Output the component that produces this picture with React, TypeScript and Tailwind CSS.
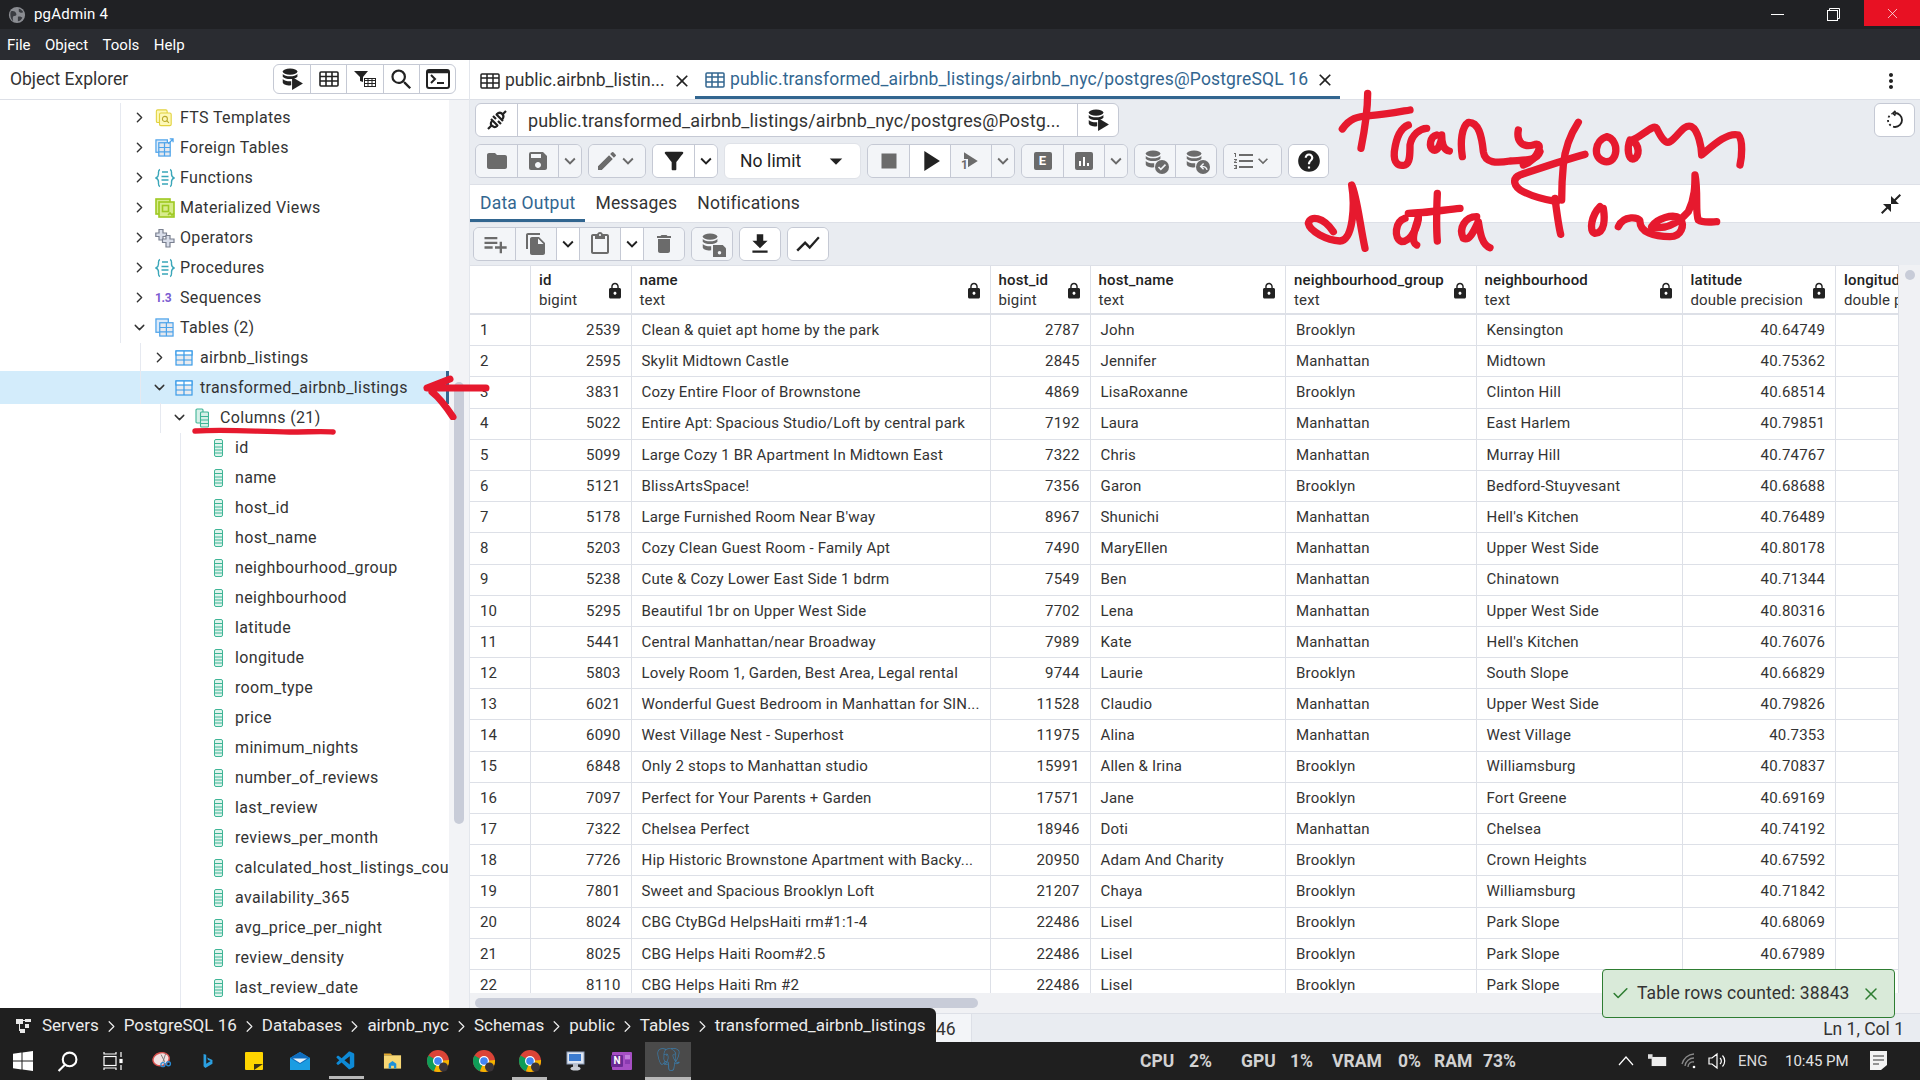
import React from "react";
import { ChevronRight, ChevronDown, X, Check } from "lucide-react";
import {
  MdFolder, MdSave, MdEdit, MdFilterAlt, MdStop, MdPlayArrow, MdPlaylistAdd, MdFileCopy, MdContentPaste,
  MdDelete, MdFileDownload, MdShowChart, MdHelp, MdLock, MdMoreVert, MdSearch, MdKeyboardArrowDown,
  MdFormatListNumbered, MdCloseFullscreen, MdClose, MdArrowDropDown,
} from "react-icons/md";
import { SiPostgresql } from "react-icons/si";
import { VscVscode } from "react-icons/vsc";

const rows: [string, string, string, string, string, string, string][] = [
  ["1","2539","Clean & quiet apt home by the park","2787","John","Brooklyn","Kensington|40.64749"],
  ["2","2595","Skylit Midtown Castle","2845","Jennifer","Manhattan","Midtown|40.75362"],
  ["3","3831","Cozy Entire Floor of Brownstone","4869","LisaRoxanne","Brooklyn","Clinton Hill|40.68514"],
  ["4","5022","Entire Apt: Spacious Studio/Loft by central park","7192","Laura","Manhattan","East Harlem|40.79851"],
  ["5","5099","Large Cozy 1 BR Apartment In Midtown East","7322","Chris","Manhattan","Murray Hill|40.74767"],
  ["6","5121","BlissArtsSpace!","7356","Garon","Brooklyn","Bedford-Stuyvesant|40.68688"],
  ["7","5178","Large Furnished Room Near B'way","8967","Shunichi","Manhattan","Hell's Kitchen|40.76489"],
  ["8","5203","Cozy Clean Guest Room - Family Apt","7490","MaryEllen","Manhattan","Upper West Side|40.80178"],
  ["9","5238","Cute & Cozy Lower East Side 1 bdrm","7549","Ben","Manhattan","Chinatown|40.71344"],
  ["10","5295","Beautiful 1br on Upper West Side","7702","Lena","Manhattan","Upper West Side|40.80316"],
  ["11","5441","Central Manhattan/near Broadway","7989","Kate","Manhattan","Hell's Kitchen|40.76076"],
  ["12","5803","Lovely Room 1, Garden, Best Area, Legal rental","9744","Laurie","Brooklyn","South Slope|40.66829"],
  ["13","6021","Wonderful Guest Bedroom in Manhattan for SIN...","11528","Claudio","Manhattan","Upper West Side|40.79826"],
  ["14","6090","West Village Nest - Superhost","11975","Alina","Manhattan","West Village|40.7353"],
  ["15","6848","Only 2 stops to Manhattan studio","15991","Allen & Irina","Brooklyn","Williamsburg|40.70837"],
  ["16","7097","Perfect for Your Parents + Garden","17571","Jane","Brooklyn","Fort Greene|40.69169"],
  ["17","7322","Chelsea Perfect","18946","Doti","Manhattan","Chelsea|40.74192"],
  ["18","7726","Hip Historic Brownstone Apartment with Backy...","20950","Adam And Charity","Brooklyn","Crown Heights|40.67592"],
  ["19","7801","Sweet and Spacious Brooklyn Loft","21207","Chaya","Brooklyn","Williamsburg|40.71842"],
  ["20","8024","CBG CtyBGd HelpsHaiti rm#1:1-4","22486","Lisel","Brooklyn","Park Slope|40.68069"],
  ["21","8025","CBG Helps Haiti Room#2.5","22486","Lisel","Brooklyn","Park Slope|40.67989"],
  ["22","8110","CBG Helps Haiti Rm #2","22486","Lisel","Brooklyn","Park Slope|40.67989"],
];

const gridCols = "grid grid-cols-[61px_100.5px_359px_100px_195.5px_190.5px_206px_153.5px_63px]";

function Db({ className = "" }: { className?: string }) {
  return (
    <svg viewBox="0 0 24 24" className={className} fill="currentColor">
      <ellipse cx="11" cy="5" rx="8" ry="3.4" />
      <path d="M3 7.6c1.4 1.7 4.6 2.6 8 2.6s6.6-.9 8-2.6v3c-1.4 1.7-4.6 2.6-8 2.6s-6.6-.9-8-2.6z" />
      <path d="M3 13c1.4 1.7 4.6 2.6 8 2.6.4 0 .8 0 1.2-.1v4.5c-.4 0-.8.1-1.2.1-4.4 0-8-1.5-8-3.6z" />
    </svg>
  );
}
function DbBadge({ kind }: { kind: "run" | "check" | "back" | "save" }) {
  return (
    <span className="relative block w-[24px] h-[24px]">
      <Db className="w-[22px] h-[22px]" />
      {kind === "run" && (
        <svg viewBox="0 0 12 12" className="absolute right-0 bottom-[1px] w-[13px] h-[13px]" fill="currentColor"><path d="M1 0l10 6-10 6z" /></svg>
      )}
      {kind === "check" && (
        <svg viewBox="0 0 12 12" className="absolute right-[-2px] bottom-[-1px] w-[14px] h-[14px]">
          <circle cx="6" cy="6" r="6" fill="currentColor" />
          <path d="M3 6l2 2 4-4" stroke="#f3f5f8" strokeWidth="1.4" fill="none" />
        </svg>
      )}
      {kind === "back" && (
        <svg viewBox="0 0 12 12" className="absolute right-[-2px] bottom-[-1px] w-[14px] h-[14px]">
          <circle cx="6" cy="6" r="6" fill="currentColor" />
          <path d="M9.5 8.5C9 6.5 7.5 5.5 5 5.5M6.5 3L4 5.5 6.5 8" stroke="#f3f5f8" strokeWidth="1.2" fill="none" />
        </svg>
      )}
      {kind === "save" && (
        <svg viewBox="0 0 12 12" className="absolute right-[-2px] bottom-[-1px] w-[13px] h-[13px]">
          <path d="M0 1h9l3 3v8H0z" fill="currentColor" />
          <circle cx="6" cy="8" r="1.6" fill="#f3f5f8" />
        </svg>
      )}
    </span>
  );
}

function Plug() {
  return (
    <svg viewBox="0 0 24 24" className="w-[24px] h-[24px]" fill="none" stroke="#222" strokeWidth="2.2">
      <path d="M3 21l4-4M21 3l-4 4" />
      <path d="M6 11l7 7M11 6l7 7" />
      <path d="M7.500 12.500c-2.500 2.500-2 4.500 0 5.500 1.500 1.500 3 1.500 5-.5M11.500 6.500c2-2 4-2.500 6-.5 1.500 2 1.500 3.500-.5 5.500" />
      <path d="M8 8l3 3M13 13l3 3" />
    </svg>
  );
}

function Btn({ w, on, children, first }: { w: string; on?: boolean; children: React.ReactNode; first?: boolean }) {
  return (
    <div className={`${w} h-full flex items-center justify-center ${first ? "" : "border-l border-[#c5c9d4]"} ${on ? "bg-white text-[#222]" : "bg-[#f3f5f8] text-[#6b6b6b]"}`}>
      {children}
    </div>
  );
}
function Group({ children }: { children: React.ReactNode }) {
  return <div className="h-[34px] flex rounded-[6px] border border-[#c5c9d4] overflow-hidden shrink-0">{children}</div>;
}
const Down = () => <MdKeyboardArrowDown size={24} />;

function FtsIcon() {
  return (
    <svg viewBox="0 0 20 20" className="w-[18px] h-[18px]" fill="#fdf8b8" stroke="#e2d23f" strokeWidth="1.2">
      <rect x="1.500" y="1" width="12" height="14" rx="1.500" />
      <rect x="5" y="4.500" width="13" height="14" rx="1.500" />
      <circle cx="11" cy="11" r="2.800" fill="none" stroke="#b9a92b" />
      <path d="M13 13l2.500 2.500" stroke="#b9a92b" />
    </svg>
  );
}
function ForeignIcon() {
  return (
    <svg viewBox="0 0 20 20" className="w-[19px] h-[19px]" fill="#dbeafa" stroke="#4da3ea" strokeWidth="1.3">
      <rect x="1" y="2" width="12" height="13" />
      <rect x="4" y="5" width="12" height="14" fill="#e4e8ee" />
      <path d="M4 10h12M4 14.500h12M10 5v14" />
      <path d="M14 6l5-5M15.500 1H19v3.500" fill="none" />
    </svg>
  );
}
function Braces({ color = "#3aa6b9" }: { color?: string }) {
  return (
    <svg viewBox="0 0 20 20" className="w-[20px] h-[20px]" fill="none" stroke={color} strokeWidth="1.4">
      <path d="M5 1.500C3 2 3.500 4 3.500 6S3 9 1 10c2 1 2.500 2 2.500 4s-.5 4 1.500 4.500" />
      <path d="M15 1.500c2 .5 1.500 2.500 1.500 4.500s.5 3 2.500 4c-2 1-2.500 2-2.500 4s.5 4-1.500 4.500" />
      <path d="M7 4h6M6.500 8.500h7M6.500 12h7M7 16h6" />
    </svg>
  );
}
function MatIcon() {
  return (
    <svg viewBox="0 0 20 20" className="w-[20px] h-[20px]" fill="#d7ec8c" stroke="#9ec921" strokeWidth="1.6">
      <rect x="1" y="1" width="14" height="15" />
      <rect x="4" y="4" width="15" height="15" />
      <rect x="7.500" y="7.500" width="6" height="6" fill="none" />
      <path d="M13 17l2-2 2 2 2-2" fill="none" />
    </svg>
  );
}
function OpIcon() {
  return (
    <svg viewBox="0 0 20 20" className="w-[20px] h-[20px]" fill="#d9deea" stroke="#7a8090" strokeWidth="1.2">
      <path d="M4 1.500h4v3.500h3.500v3.500H8V12H4V8.500H.8V5H4z" />
      <path d="M11 7.500h4V11h4v3.500h-4V19h-4v-4.500H7.500V11H11z" />
    </svg>
  );
}
function SeqIcon() {
  return <span className="text-[12px] font-bold text-[#7a5bd1] tracking-tight">1.3</span>;
}
function TablesIcon() {
  return (
    <svg viewBox="0 0 20 20" className="w-[19px] h-[19px]" fill="#dbeafa" stroke="#4da3ea" strokeWidth="1.3">
      <rect x="1" y="1" width="13" height="14" />
      <rect x="5" y="5" width="14" height="14" fill="#e4e8ee" />
      <path d="M5 10h14M5 14.500h14M12 5v14" />
    </svg>
  );
}
function TableIcon() {
  return (
    <svg viewBox="0 0 18 16" className="w-[18px] h-[16px]" fill="#e9ebef" stroke="#3a9be8" strokeWidth="1.200">
      <rect x="1" y="1" width="16" height="14" />
      <rect x="1" y="1" width="16" height="4" fill="#fff" />
      <path d="M1 10h16M9 1v14" />
    </svg>
  );
}
function ColumnsIcon() {
  return (
    <svg viewBox="0 0 14 20" className="w-[14px] h-[20px]" fill="#d7f0e8" stroke="#3fb596" strokeWidth="1.100">
      <rect x="1" y="1" width="7" height="14" rx="1" />
      <rect x="5.500" y="4" width="8" height="15" rx="1" />
      <path d="M5.500 8.500h8M5.500 12h8M5.500 15.500h8" />
    </svg>
  );
}
function ColumnIcon() {
  return (
    <svg viewBox="0 0 9 18" className="w-[9px] h-[18px]" fill="#dff4ed" stroke="#3fb596" strokeWidth="1">
      <rect x="0.500" y="0.500" width="8" height="17" rx="1.500" />
      <path d="M.5 4.500h8M.5 8h8M.5 11h8M.5 14h8" />
    </svg>
  );
}

function TreeRow({ level, open, leaf, icon, label, selected }: { level: 0 | 1 | 2 | 3; open?: boolean; leaf?: boolean; icon: React.ReactNode; label: string; selected?: boolean }) {
  const ml = ["ml-[120px]", "ml-[140px]", "ml-[160px]", "ml-[180px]"][level];
  return (
    <div className={`relative flex ${selected ? "h-[33px] -my-[1.5px] bg-[#d3ecfb]" : "h-[30px]"}`}>
      <div className={`${ml} border-l border-[#e6e9f0] flex items-center h-full whitespace-nowrap overflow-hidden flex-1`}>
        {!leaf && (
          <span className="w-[34px] pl-[10px] shrink-0 text-[#333]">
            {open ? <ChevronDown size={17} strokeWidth={2} /> : <ChevronRight size={17} strokeWidth={2} />}
          </span>
        )}
        {leaf && <span className="w-[33px] shrink-0" />}
        <span className={`${leaf ? "w-[21px]" : "w-[25px]"} shrink-0 flex items-center`}>{icon}</span>
        <span className="text-[16px] text-[#333] tracking-[0.35px]">{label}</span>
      </div>
      {selected && <span className="absolute right-0 top-0 bottom-0 w-[3px] bg-[#326690]" />}
    </div>
  );
}

function Tab({ label, active }: { label: string; active?: boolean }) {
  return (
    <div className={`h-full flex items-center px-[10px] pt-[3px] text-[17.5px] tracking-[0.2px] ${active ? "text-[#326690] border-b-[3px] border-[#326690]" : "text-[#333] pb-[3px]"}`}>{label}</div>
  );
}

function Head({ a, b }: { a: string; b: string }) {
  return (
    <div className="relative border-r border-[#dde0e7] h-full pl-[8px] pt-[4px] overflow-hidden whitespace-nowrap">
      <div className="text-[15px] font-medium leading-[20px] text-[#222] tracking-[0.15px]">{a}</div>
      <div className="text-[15px] leading-[20px] text-[#333] tracking-[0.15px]">{b}</div>
      {a !== "longitud" && <MdLock size={18} className="absolute right-[7px] top-[16px] text-[#222]" />}
    </div>
  );
}
function Cell({ v, right }: { v: string; right?: boolean }) {
  return <div className={`border-r border-[#dde0e7] h-full flex items-center overflow-hidden whitespace-nowrap text-[15px] tracking-[0.18px] text-[#333] ${right ? "justify-end pr-[10px]" : "pl-[10px]"}`}>{v}</div>;
}

function Chrome() {
  return (
    <svg viewBox="0 0 24 24" className="w-[24px] h-[24px]">
      <circle cx="12" cy="12" r="11" fill="#db4437" />
      <path d="M12 12L2.500 6.500A11 11 0 0 0 8 22.300z" fill="#0f9d58" />
      <path d="M12 12l11-1A11 11 0 0 1 8 22.300z" fill="#f4b400" />
      <circle cx="12" cy="12" r="5" fill="#fff" />
      <circle cx="12" cy="12" r="3.800" fill="#4285f4" />
      <circle cx="17.500" cy="18" r="4.500" fill="#3a3438" />
    </svg>
  );
}

const trayText = "text-[17.5px] font-bold text-[#d2d2d2]";

export default function App() {
  const columns = ["id","name","host_id","host_name","neighbourhood_group","neighbourhood","latitude","longitude","room_type","price","minimum_nights","number_of_reviews","last_review","reviews_per_month","calculated_host_listings_count","availability_365","avg_price_per_night","review_density","last_review_date","x","y"];
  return (
    <div className="relative w-[1920px] h-[1080px] overflow-hidden flex flex-col bg-white font-['Roboto',sans-serif]">
      {/* title bar */}
      <div className="h-[29px] bg-[#202124] flex items-center shrink-0 text-white">
        <svg viewBox="0 0 20 20" className="ml-[8px] w-[18px] h-[18px]">
          <circle cx="10" cy="10" r="9" fill="#8b8d92" />
          <path d="M3 6c3-1 5 0 6 2s0 3-2 3-2 3-1 6c-3-2-4-7-3-11zM12 3c2 0 4 2 5 4-2 1-4 0-5-1zM11 12c2-1 4 0 5 1-1 2-3 4-5 4z" fill="#3a3c41" />
        </svg>
        <span className="ml-[8px] text-[15px] tracking-[0.2px]">pgAdmin 4</span>
        <div className="ml-auto flex items-center h-full">
          <div className="w-[50px] flex justify-center"><span className="block w-[13px] h-px bg-white" /></div>
          <div className="w-[62px] flex justify-center">
            <svg viewBox="0 0 13 13" className="w-[13px] h-[13px]" fill="none" stroke="#fff"><rect x="0.500" y="2.500" width="10" height="10" /><path d="M2.500 2.500v-2h10v10h-2" /></svg>
          </div>
          <div className="w-[56px] h-[26px] self-start bg-[#e81123] flex items-center justify-center">
            <X size={17} strokeWidth={1} className="text-white" />
          </div>
        </div>
      </div>
      {/* menu bar */}
      <div className="h-[31px] bg-[#2a2c31] flex items-center shrink-0 text-white text-[15px] pl-[7px] pt-[1px] gap-[14.5px]">
        <span>File</span><span>Object</span><span>Tools</span><span>Help</span>
      </div>

      {/* body */}
      <div className="flex flex-1 min-h-0">
        {/* sidebar */}
        <div className="w-[470px] shrink-0 flex flex-col border-r border-[#e3e6ec]">
          <div className="h-[40px] shrink-0 border-b border-[#dde0e7] flex items-center pl-[10px] pr-[13px]">
            <span className="text-[17.5px] text-[#333]">Object Explorer</span>
            <div className="ml-auto h-[30px] mt-[-1px] flex rounded-[6px] border border-[#c5c9d4] overflow-hidden">
              <div className="w-[36px] flex items-center justify-center text-[#222]"><DbBadge kind="run" /></div>
              <div className="w-[36px] border-l border-[#c5c9d4] flex items-center justify-center">
                <svg viewBox="0 0 20 16" className="w-[20px] h-[16px]" fill="none" stroke="#222" strokeWidth="1.600"><rect x="1" y="1" width="18" height="14" rx="1" /><path d="M1 5.500h18M1 10h18M7 1v14M13 1v14" /></svg>
              </div>
              <div className="w-[37px] border-l border-[#c5c9d4] flex items-center justify-center">
                <svg viewBox="0 0 22 16" className="w-[22px] h-[16px]" fill="#222"><path d="M0 0h14L9 6v5L6 10V6z" /><rect x="10.500" y="7.500" width="11" height="8" fill="none" stroke="#222" /><path d="M10.500 9.500h11M14 8v8M18 8v8M10.500 12.500h11" stroke="#222" /></svg>
              </div>
              <div className="w-[36px] border-l border-[#c5c9d4] flex items-center justify-center text-[#222]"><MdSearch size={27} /></div>
              <div className="w-[36px] border-l border-[#c5c9d4] flex items-center justify-center">
                <svg viewBox="0 0 24 20" className="w-[24px] h-[20px]" fill="none" stroke="#222" strokeWidth="2"><rect x="1" y="1" width="22" height="18" rx="2" /><path d="M5 6l4 4-4 4M11 14h7" /><path d="M1 3h22" strokeWidth="2.500" /></svg>
              </div>
            </div>
          </div>
          <div className="flex-1 flex min-h-0">
            <div className="w-[449px] pt-[2.5px] overflow-hidden">
              <TreeRow level={0} icon={<FtsIcon />} label="FTS Templates" />
              <TreeRow level={0} icon={<ForeignIcon />} label="Foreign Tables" />
              <TreeRow level={0} icon={<Braces />} label="Functions" />
              <TreeRow level={0} icon={<MatIcon />} label="Materialized Views" />
              <TreeRow level={0} icon={<OpIcon />} label="Operators" />
              <TreeRow level={0} icon={<Braces />} label="Procedures" />
              <TreeRow level={0} icon={<SeqIcon />} label="Sequences" />
              <TreeRow level={0} open icon={<TablesIcon />} label="Tables (2)" />
              <TreeRow level={1} icon={<TableIcon />} label="airbnb_listings" />
              <TreeRow level={1} open selected icon={<TableIcon />} label="transformed_airbnb_listings" />
              <TreeRow level={2} open icon={<ColumnsIcon />} label="Columns (21)" />
              {columns.map((c) => <TreeRow key={c} level={3} leaf icon={<ColumnIcon />} label={c} />)}
            </div>
            <div className="w-[20px] bg-[#f2f3f6] relative">
              <div className="absolute left-[5px] top-[282px] w-[10px] h-[442px] rounded-full bg-[#c8ccd8]" />
            </div>
          </div>
        </div>

        {/* main */}
        <div className="flex-1 min-w-0 flex flex-col">
          {/* editor tabs */}
          <div className="h-[40px] shrink-0 flex items-stretch border-b border-[#dde0e7] text-[17.5px]">
            <div className="w-[225px] flex items-center pl-[10px] pt-[2px] text-[#333]">
              <svg viewBox="0 0 20 16" className="w-[20px] h-[16px] mr-[5px]" fill="none" stroke="#222" strokeWidth="1.500"><rect x="1" y="1" width="18" height="14" rx="1" /><path d="M1 5h18M1 10h18M7 1v14M13 1v14" /></svg>
              <span>public.airbnb_listin...</span>
              <MdClose size={20} className="ml-[7px] text-[#222]" />
            </div>
            <div className="w-[645px] flex items-center pl-[10px] pt-[3px] text-[#326690] border-b-[3px] border-[#326690] h-[39px]">
              <svg viewBox="0 0 20 16" className="w-[20px] h-[16px] mr-[5px]" fill="none" stroke="#326690" strokeWidth="1.500"><rect x="1" y="1" width="18" height="14" rx="1" /><path d="M1 5h18M1 10h18M7 1v14M13 1v14" /></svg>
              <span className="whitespace-nowrap tracking-[0.16px]">public.transformed_airbnb_listings/airbnb_nyc/postgres@PostgreSQL 16</span>
              <MdClose size={20} className="ml-[7px] text-[#222]" />
            </div>
            <div className="ml-auto pr-[17px] pt-[2px] flex items-center text-[#222]"><MdMoreVert size={24} /></div>
          </div>

          {/* query toolbars */}
          <div className="h-[85px] shrink-0 bg-[#e9ecf1] pl-[5px] pr-[5px] pt-[3px] border-b border-[#dde0e7]">
            <div className="flex h-[34px]">
              <div className="w-[644px] h-[34px] flex rounded-[6px] border border-[#c5c9d4] bg-white overflow-hidden">
                <div className="w-[41px] flex items-center justify-center"><Plug /></div>
                <div className="flex-1 border-l border-[#c5c9d4] flex items-center pl-[10px] text-[18px] tracking-[0.12px] text-[#333] whitespace-nowrap">public.transformed_airbnb_listings/airbnb_nyc/postgres@Postg...</div>
                <div className="w-[41px] border-l border-[#c5c9d4] flex items-center justify-center text-[#222]"><DbBadge kind="run" /></div>
              </div>
              <div className="ml-auto w-[41px] h-[34px] rounded-[6px] border border-[#c5c9d4] bg-white flex items-center justify-center">
                <svg viewBox="0 0 20 20" className="w-[20px] h-[20px]" fill="none" stroke="#222" strokeWidth="1.800"><path d="M10 3a7 7 0 0 1 0 14" /><path d="M10 17a7 7 0 0 1-7-7 7 7 0 0 1 4-6.300" strokeDasharray="2 2.500" /><path d="M10.500 1L8 3.200l2.500 2.300" /></svg>
              </div>
            </div>
            <div className="flex gap-[6px] mt-[7px] h-[34px]">
              <Group>
                <Btn first w="w-[41px]"><MdFolder size={24} /></Btn>
                <Btn w="w-[41px]"><MdSave size={24} /></Btn>
                <Btn w="w-[23px]"><Down /></Btn>
              </Group>
              <Group><Btn first w="w-[56px]"><span className="flex items-center"><MdEdit size={24} /><MdKeyboardArrowDown size={22} className="-ml-[2px]" /></span></Btn></Group>
              <Group>
                <Btn first on w="w-[41px]"><MdFilterAlt size={28} /></Btn>
                <Btn on w="w-[23px]"><Down /></Btn>
              </Group>
              <div className="w-[137px] h-[36px] -mt-[1px] bg-white rounded-[6px] border border-[#dfe2e8] flex items-center pl-[15px] pr-[9px] text-[17.5px] tracking-[0.1px] text-[#222]">
                No limit<MdArrowDropDown size={30} className="ml-auto" />
              </div>
              <Group>
                <Btn first w="w-[41px]"><MdStop size={30} /></Btn>
                <Btn on w="w-[41px]"><MdPlayArrow size={34} /></Btn>
                <Btn w="w-[41px]">
                  <span className="relative block w-[24px] h-[24px]">
                    <MdPlayArrow size={30} className="absolute -left-[5px] -top-[3px]" />
                    <span className="absolute left-[2px] top-[10px] text-[12px] font-bold leading-none bg-[#f3f5f8]">1</span>
                  </span>
                </Btn>
                <Btn w="w-[23px]"><Down /></Btn>
              </Group>
              <Group>
                <Btn first w="w-[41px]"><span className="w-[18px] h-[18px] rounded-[2px] bg-[#6b6b6b] text-white text-[13px] font-bold flex items-center justify-center">E</span></Btn>
                <Btn w="w-[41px]"><span className="w-[18px] h-[18px] rounded-[2px] bg-[#6b6b6b] flex items-end justify-center gap-[2px] pb-[4px]"><i className="block w-[2px] h-[5px] bg-white" /><i className="block w-[2px] h-[9px] bg-white" /><i className="block w-[2px] h-[3px] bg-white" /></span></Btn>
                <Btn w="w-[23px]"><Down /></Btn>
              </Group>
              <Group>
                <Btn first w="w-[40px]"><DbBadge kind="check" /></Btn>
                <Btn w="w-[41px]"><DbBadge kind="back" /></Btn>
              </Group>
              <Group><Btn first w="w-[57px]"><span className="flex items-center"><MdFormatListNumbered size={24} /><MdKeyboardArrowDown size={20} className="-ml-[3px]" /></span></Btn></Group>
              <Group><Btn first on w="w-[39px]"><MdHelp size={26} /></Btn></Group>
            </div>
          </div>

          {/* data tabs */}
          <div className="h-[38px] shrink-0 flex items-stretch border-b border-[#dde0e7]">
            <Tab label="Data Output" active />
            <Tab label="Messages" />
            <Tab label="Notifications" />
            <div className="ml-auto pr-[17px] flex items-center text-[#222]"><MdCloseFullscreen size={24} /></div>
          </div>

          {/* data toolbar */}
          <div className="h-[42px] shrink-0 bg-[#e9ecf1] flex items-center gap-[6px] pl-[3px]">
            <Group>
              <Btn first w="w-[41px]"><MdPlaylistAdd size={28} /></Btn>
              <Btn w="w-[41px]"><MdFileCopy size={24} /></Btn>
              <Btn on w="w-[23px]"><Down /></Btn>
              <Btn w="w-[41px]"><MdContentPaste size={24} /></Btn>
              <Btn on w="w-[23px]"><Down /></Btn>
              <Btn w="w-[41px]"><MdDelete size={24} /></Btn>
            </Group>
            <Group><Btn first w="w-[40px]"><DbBadge kind="save" /></Btn></Group>
            <Group><Btn first on w="w-[40px]"><MdFileDownload size={26} /></Btn></Group>
            <Group><Btn first on w="w-[40px]"><MdShowChart size={28} /></Btn></Group>
          </div>

          {/* grid */}
          <div className="flex-1 min-h-0 flex">
            <div className="w-[1429px] shrink-0 overflow-hidden bg-white">
              <div className={`${gridCols} h-[50px] border-b-2 border-t border-[#dde0e7]`}>
                <div className="border-r border-[#dde0e7]" />
                <Head a="id" b="bigint" />
                <Head a="name" b="text" />
                <Head a="host_id" b="bigint" />
                <Head a="host_name" b="text" />
                <Head a="neighbourhood_group" b="text" />
                <Head a="neighbourhood" b="text" />
                <Head a="latitude" b="double precision" />
                <Head a="longitud" b="double p" />
              </div>
              {rows.map((r) => {
                const [hood, lat] = r[6].split("|");
                return (
                  <div key={r[0]} className={`${gridCols} h-[31.2px] border-b border-[#dde0e7]`}>
                    <Cell v={r[0]} />
                    <Cell v={r[1]} right />
                    <Cell v={r[2]} />
                    <Cell v={r[3]} right />
                    <Cell v={r[4]} />
                    <Cell v={r[5]} />
                    <Cell v={hood} />
                    <Cell v={lat} right />
                    <Cell v="" />
                  </div>
                );
              })}
            </div>
            <div className="flex-1 bg-[#f0f1f4] relative">
              <div className="absolute left-[6px] top-[5px] w-[10px] h-[10px] rounded-full bg-[#c8ccd8]" />
            </div>
          </div>
          <div className="h-[20px] shrink-0 bg-[#f0f1f4] pl-[5px] pt-[5px]">
            <div className="w-[503px] h-[10px] rounded-full bg-[#c8ccd8]" />
          </div>
          {/* status bar */}
          <div className="h-[29px] shrink-0 bg-[#e9ecf1] border-t border-[#dde0e7] flex items-center pr-[16px] text-[17.5px] text-[#333]">
            <span className="ml-[466px] w-[36px] h-full flex items-center bg-[#f3f5f8] border-r border-[#dde0e7] pt-[2px]">46</span>
            <span className="ml-auto pt-[2px]">Ln 1, Col 1</span>
          </div>
        </div>
      </div>

      {/* taskbar */}
      <div className="h-[38px] shrink-0 bg-[#1f1f1f] flex items-center">
        <div className="w-[45px] flex justify-center">
          <svg viewBox="0 0 20 20" className="w-[20px] h-[20px]" fill="#fff"><path d="M0 2.800l8.500-1.200v8H0zM9.500 1.400L20 0v9.600H9.500zM0 10.500h8.500v8L0 17.300zM9.500 10.500H20V20L9.500 18.600z" /></svg>
        </div>
        <div className="w-[45px] flex justify-center">
          <svg viewBox="0 0 20 20" className="w-[21px] h-[21px]" fill="none" stroke="#fff" strokeWidth="2"><circle cx="12" cy="8" r="6.500" /><path d="M7.500 13l-6 6" /></svg>
        </div>
        <div className="w-[45px] flex justify-center">
          <svg viewBox="0 0 20 20" className="w-[20px] h-[20px]" fill="none" stroke="#fff" strokeWidth="1.200"><path d="M1 1v2h12V1M1 19v-2h12v2" /><rect x="1" y="5.500" width="12" height="9" /><path d="M18 1v5M18 14v5" /><rect x="17" y="8.500" width="2" height="3" fill="#fff" /></svg>
        </div>
        <div className="w-[4px]" />
        <div className="w-[46px] flex justify-center">
          <svg viewBox="0 0 24 20" className="w-[22px] h-[20px]"><ellipse cx="11" cy="8" rx="9" ry="7" transform="rotate(-15 11 8)" fill="#f2e2e2" stroke="#d9514e" strokeWidth="1.500" /><path d="M11 3l4 8M16 2l-3 9" stroke="#777" strokeWidth="1" /><circle cx="13" cy="14" r="2.200" fill="none" stroke="#2a8bd4" strokeWidth="1.400" /><circle cx="19" cy="13" r="2.200" fill="none" stroke="#2a8bd4" strokeWidth="1.400" /></svg>
        </div>
        <div className="w-[46px] flex justify-center">
          <svg viewBox="0 0 12 18" className="w-[12px] h-[16px]"><path d="M1 1l3 1v10l5-3-3-1-1-3 6 3v4l-8 5-2-2z" fill="#2b9fe0" /></svg>
        </div>
        <div className="w-[46px] flex justify-center">
          <svg viewBox="0 0 18 18" className="w-[18px] h-[18px]"><rect width="18" height="18" rx="1" fill="#ffd500" /><path d="M9 18V12h9z" fill="#3b3417" /></svg>
        </div>
        <div className="w-[46px] flex justify-center">
          <svg viewBox="0 0 20 18" className="w-[20px] h-[18px]"><path d="M0 6l10-6 10 6v12H0z" fill="#1b9de2" /><path d="M0 6l10 6 10-6-10-6z" fill="#0f6cbd" /><path d="M3 6.500h14l-7 4.500z" fill="#e8f3fb" /></svg>
        </div>
        <div className="w-[46px] flex justify-center relative text-[#0e8ad6]"><VscVscode size={22} /><span className="absolute bottom-[-7px] left-[6px] w-[35px] h-[3px] bg-[#b8b8b8]" /></div>
        <div className="w-[46px] flex justify-center">
          <svg viewBox="0 0 20 18" className="w-[19px] h-[18px]"><path d="M1 1h7l2 2h-9z" fill="#e2a82d" /><rect x="1" y="3" width="18" height="14" fill="#f7d774" /><path d="M6 17v-5l4-3 4 3v5h-2.500v-3h-3v3z" fill="#1e90d8" /></svg>
        </div>
        <div className="w-[46px] flex justify-center"><Chrome /></div>
        <div className="w-[46px] flex justify-center"><Chrome /></div>
        <div className="w-[46px] flex justify-center relative"><Chrome /><span className="absolute bottom-[-7px] left-[5px] w-[35px] h-[3px] bg-[#b8b8b8]" /></div>
        <div className="w-[46px] flex justify-center">
          <svg viewBox="0 0 20 20" className="w-[20px] h-[20px]"><rect x="1" y="1" width="17" height="12" fill="#dfe6f2" stroke="#8fa0bb" /><rect x="3" y="3" width="12" height="7" fill="#3b7bd0" /><rect x="7" y="13" width="5" height="3" fill="#b9bfca" /><ellipse cx="9.500" cy="17.500" rx="5" ry="2" fill="#c9cdd4" /></svg>
        </div>
        <div className="w-[46px] flex justify-center">
          <span className="relative block w-[20px] h-[18px] rounded-[1px] bg-[#a64fc4]">
            <span className="absolute left-[-1px] top-[3px] w-[12px] h-[12px] rounded-[1px] bg-[#6b2a94] text-white text-[10px] font-bold leading-[12px] text-center">N</span>
            <span className="absolute right-[2px] top-[3px] w-[5px] h-[4px] bg-[#c27fdc]" />
            <span className="absolute right-[2px] top-[8px] w-[5px] h-[4px] bg-[#8a3bb0]" />
          </span>
        </div>
        <div className="w-[46px] h-full flex items-center justify-center bg-[#4a4a4a] border-b-[3px] border-[#b8b8b8] text-[#3b7ba8]"><SiPostgresql size={23} /></div>

        {/* tray */}
        <div className={`ml-[449px] flex items-center pt-[1px] ${trayText}`}>
          <span className="w-[49px]">CPU</span>
          <span className="w-[52px]">2%</span>
          <span className="w-[49px]">GPU</span>
          <span className="w-[42px]">1%</span>
          <span className="w-[66px]">VRAM</span>
          <span className="w-[36px]">0%</span>
          <span className="w-[49px]">RAM</span>
          <span className="w-[135px]">73%</span>
        </div>
        <div className="w-[30px] text-white"><svg viewBox="0 0 16 10" className="w-[16px] h-[10px]" fill="none" stroke="#fff" strokeWidth="1.200"><path d="M1 9l7-8 7 8" /></svg></div>
        <div className="w-[32px]"><svg viewBox="0 0 22 16" className="w-[20px] h-[15px]"><rect x="4" y="3" width="16" height="10" fill="#eee" /><rect x="0" y="0" width="5" height="5" fill="#ddd" /></svg></div>
        <div className="w-[27px]"><svg viewBox="0 0 18 18" className="w-[18px] h-[18px]" fill="none" stroke="#8a8a8a" strokeWidth="1.300"><path d="M2 12a13 13 0 0 1 12-10M5 14a9 9 0 0 1 9-8M8 15a5 5 0 0 1 6-5" /><circle cx="14" cy="15" r="1.300" fill="#fff" stroke="none" /></svg></div>
        <div className="w-[31px]"><svg viewBox="0 0 20 20" className="w-[20px] h-[20px]" fill="none" stroke="#fff" strokeWidth="1.200"><path d="M2 7h3l5-4v14l-5-4H2zM13 7a4 4 0 0 1 0 6M15.500 4.500a8 8 0 0 1 0 11" /></svg></div>
        <span className="w-[36px] text-[15px] text-[#d8d8d8]">ENG</span>
        <span className="w-[84px] ml-[11px] text-[15px] text-[#e4e4e4] whitespace-nowrap">10:45 PM</span>
        <svg viewBox="0 0 20 20" className="w-[20px] h-[20px]" fill="#f2f2f2"><path d="M1 0h17v14l-6 5H1z" /><path d="M4 5h11M4 9h11M4 13h6" stroke="#333" strokeWidth="1" /></svg>
      </div>

      {/* breadcrumb overlay */}
      <div className="absolute left-0 top-[1008px] w-[936px] h-[34px] bg-[#1f1f1f] rounded-tr-[6px] flex items-center pl-[16px] pt-[2px] text-[17px] text-[#ececec] whitespace-nowrap">
        <svg viewBox="0 0 16 16" className="w-[16px] h-[16px] mr-[10px]" fill="#e8e8e8"><rect x="0" y="1" width="7" height="5" /><rect x="9" y="1" width="6" height="3" /><rect x="9" y="6" width="4" height="4" /><rect x="4" y="11" width="5" height="4" /><path d="M3 6h1v7H3zM7 2h2v1H7z" /></svg>
        {["Servers","PostgreSQL 16","Databases","airbnb_nyc","Schemas","public","Tables","transformed_airbnb_listings"].map((t, i) => (
          <React.Fragment key={t}>
            {i > 0 && <ChevronRight size={19} strokeWidth={1.500} className="mx-[3px]" />}
            <span>{t}</span>
          </React.Fragment>
        ))}
      </div>

      {/* toast */}
      <div className="absolute left-[1602px] top-[969px] w-[293px] h-[49px] rounded-[4px] border border-[#2e7d32] bg-[#d9ead9] flex items-center pl-[8px] text-[17.5px] tracking-[0.1px] text-[#333] whitespace-nowrap">
        <Check size={19} strokeWidth={2} className="text-[#2e7d32] mr-[7px]" />
        Table rows counted: 38843
        <X size={20} strokeWidth={1.800} className="text-[#2e7d32] ml-[11px]" />
      </div>

      {/* hand annotations */}
      <svg viewBox="0 0 1440 540" className="absolute left-[1290px] top-[85px] w-[480px] h-[180px] pointer-events-none" fill="none" stroke="#e6192e" strokeWidth="22" strokeLinecap="round" strokeLinejoin="round">
        <path d="M233 25C233 60 225 130 213 190" />
        <path d="M157 132C180 100 200 95 240 92C290 88 330 80 360 75" />
        <path d="M355 120C330 130 318 160 313 200C310 235 325 245 345 240C360 235 360 210 360 180C365 150 390 130 410 130" />
        <path d="M440 150C420 155 415 185 430 195C445 200 455 170 455 150C455 170 460 195 478 198" />
        <path d="M517 215C510 170 515 125 535 112C565 110 575 150 580 200C585 235 620 235 660 228C700 225 740 230 750 200" />
        <path d="M685 135C680 160 690 190 730 180C765 165 745 225 700 240" />
        <path d="M865 112C840 150 825 190 820 240C815 290 815 320 815 345" />
        <path d="M885 208C820 225 750 250 690 270C665 280 670 305 700 320C730 335 770 345 800 350" />
        <path d="M795 340C800 380 805 420 812 448" />
        <path d="M950 155C915 165 905 220 945 230C985 235 990 165 950 155" />
        <path d="M1020 165C1010 190 1015 225 1030 222C1050 215 1050 180 1025 165C1050 160 1090 115 1100 130C1110 150 1125 180 1140 170C1165 155 1180 115 1205 125C1225 135 1235 190 1235 210C1260 190 1310 140 1345 150C1360 165 1355 220 1350 240" />
        <path d="M130 440C100 395 60 390 55 415C60 440 110 465 150 468C190 465 195 360 185 300C200 330 210 420 225 490" />
        <path d="M345 400C315 410 310 460 335 470C365 470 385 420 385 395" />
        <path d="M385 400C375 430 360 470 380 480" />
        <path d="M442 325C440 370 438 420 442 468" />
        <path d="M355 385C400 385 460 375 510 370" />
        <path d="M560 395C525 395 505 430 520 460C540 470 555 430 565 410C570 440 575 480 600 488" />
        <path d="M930 365C905 390 895 440 915 445C945 445 945 400 940 370" />
        <path d="M985 425C1000 390 1050 395 1050 410C1050 440 1090 455 1140 455C1175 455 1185 420 1170 400C1150 385 1100 400 1085 425C1120 435 1160 420 1195 380C1215 340 1215 300 1215 270C1225 320 1215 385 1225 405C1240 415 1270 410 1280 410" />
      </svg>
      <svg viewBox="0 0 70 50" className="absolute left-[420px] top-[370px] w-[70px] h-[50px] pointer-events-none" fill="none" stroke="#e6192e" strokeWidth="7" strokeLinecap="round">
        <path d="M7 18H66M7 18L30 9M12 22C20 28 27 38 33 47" />
      </svg>
      <svg viewBox="0 0 150 8" className="absolute left-[192px] top-[427px] w-[146px] h-[8px] pointer-events-none" fill="none" stroke="#e6192e" strokeWidth="5.500" strokeLinecap="round">
        <path d="M3 4C40 2 70 5 100 5C120 5 135 4 145 5" />
      </svg>
    </div>
  );
}
